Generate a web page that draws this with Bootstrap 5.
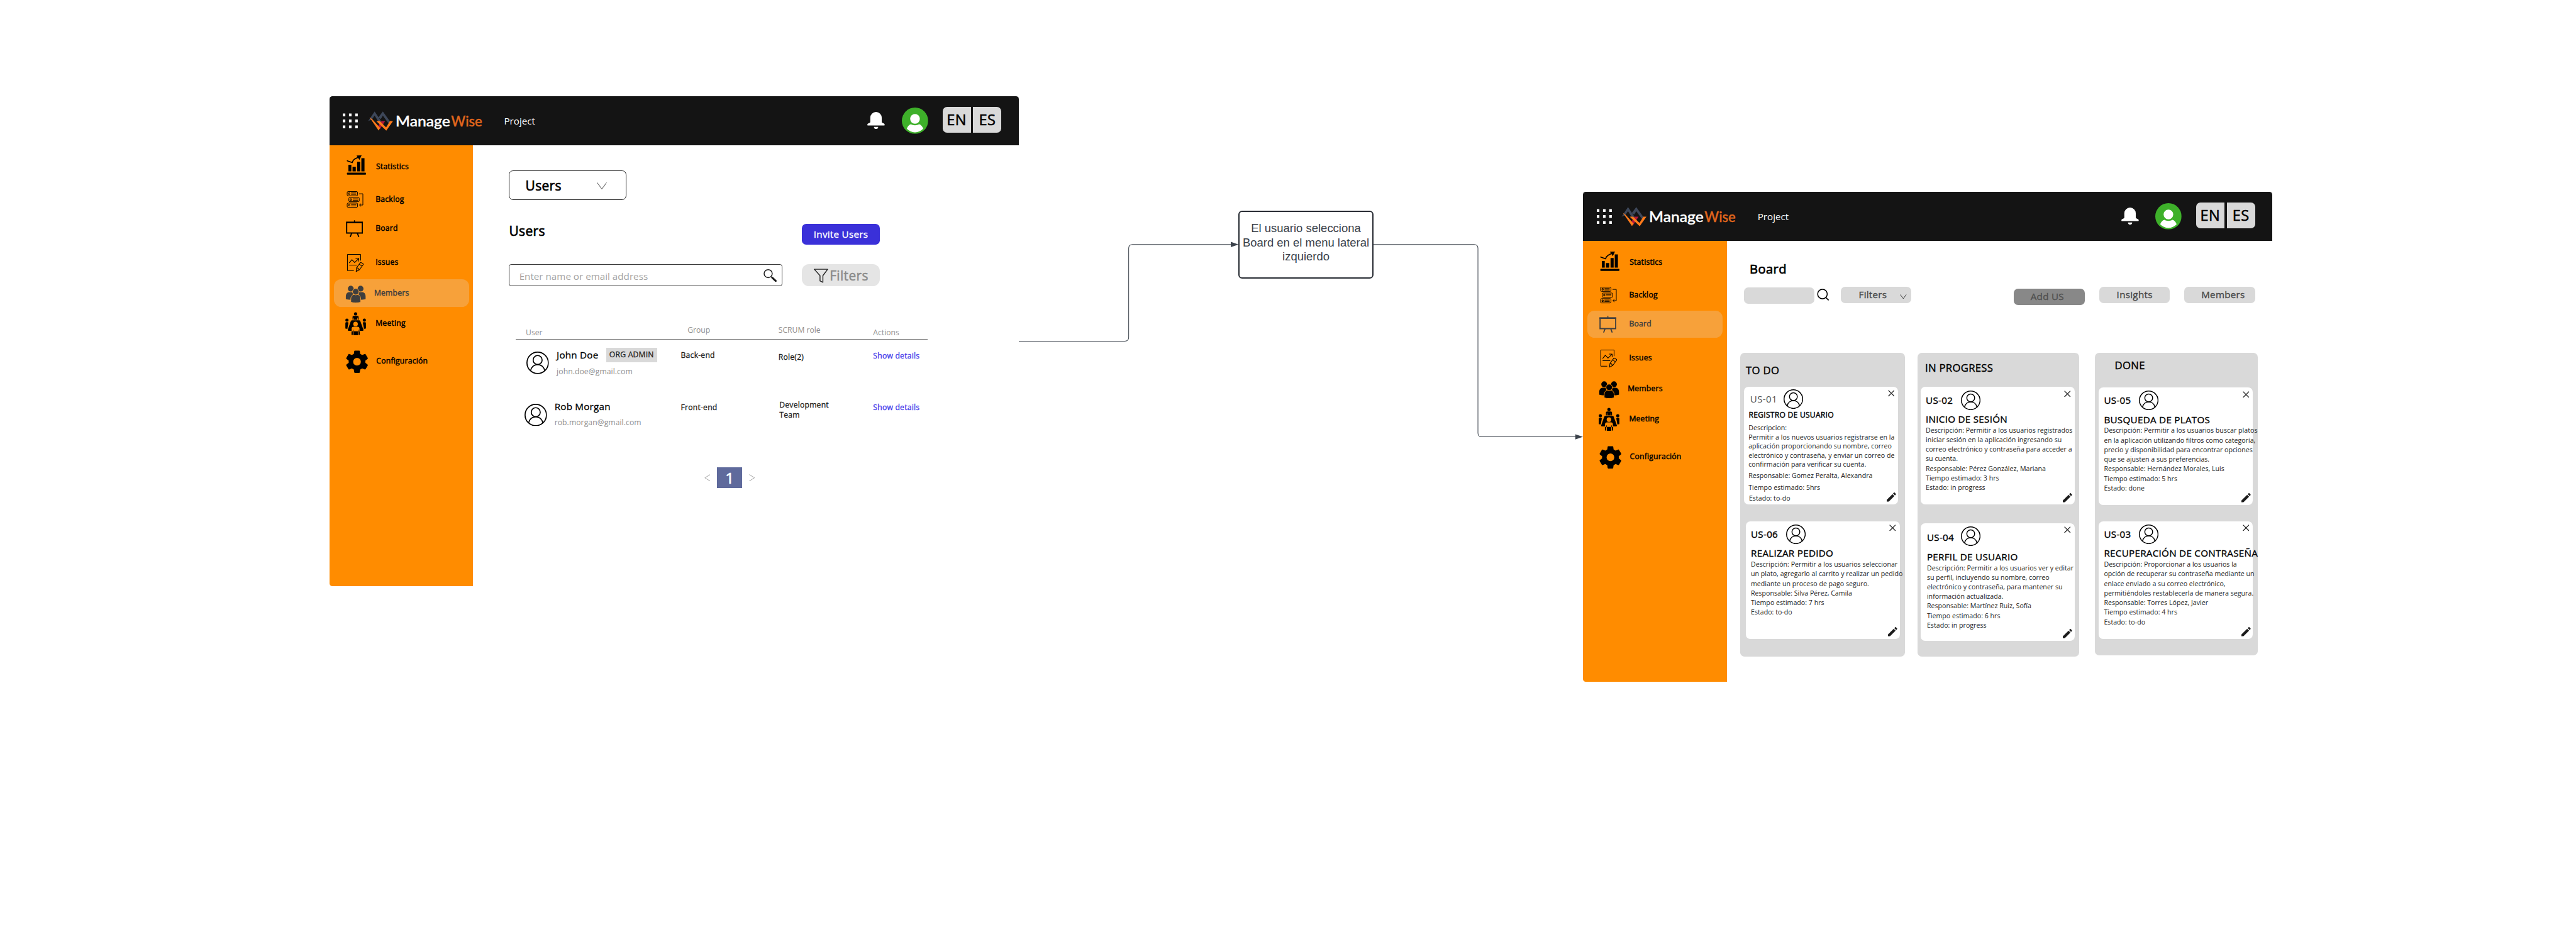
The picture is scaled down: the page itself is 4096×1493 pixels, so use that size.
<!DOCTYPE html>
<html lang="es">
<head>
<meta charset="utf-8">
<meta name="viewport" content="width=device-width, initial-scale=1">
<title>ManageWise – flujo Members a Board</title>
<link href="https://cdn.jsdelivr.net/npm/bootstrap@5.3.0/dist/css/bootstrap.min.css" rel="stylesheet">
<style>
/* 1rem = 10 units of the 5384-unit wide canvas */
html{font-size:calc(100vw / 538.4)}
body{font-family:"Open Sans","Noto Sans",sans-serif;font-size:1.6rem;line-height:2.2rem;color:#000;background:#fff;margin:0;overflow:hidden}
svg{display:block;flex:none}
.flow-canvas{position:relative;width:538.4rem;height:196.2rem;overflow:hidden}
.flow-lines{position:absolute;left:0;top:0;width:538.4rem;height:196.3rem}
.app-window{position:absolute;width:144rem;height:102.4rem;border-radius:.6rem;overflow:hidden;background:#fff}
.win-members{left:68.9rem;top:20.1rem}
.win-board{left:330.9rem;top:40.1rem}
.step-box{position:absolute;left:258.8rem;top:44rem;width:28.3rem;height:14.2rem;border:2px solid #282c33;border-radius:.8rem;background:#fff;font-family:"Liberation Sans",Arial,sans-serif;font-size:2.43rem;line-height:2.94rem;color:#3a414a;padding-bottom:.8rem;white-space:nowrap}

/* medium weight, between the regular and semibold cuts */
.side-item,.lang-btn,.pick-box,.h-users,.h-board,.btn-invite,.btn-filter,.people-body,.pill,.lane-title,.story-id,.story h3{font-weight:400;-webkit-text-stroke:.024em currentColor;letter-spacing:.018em}

.app-header{height:10.2rem;background:#141414;padding:0 3.6rem 0 2.8rem}
.ic-dots{width:3.2rem;height:3.2rem}
.brand-logo{width:24rem;height:4.4rem;margin:.5rem 0 0 2rem}
.brand-logo text{font-family:Lato,sans-serif;font-size:29.5px;font-weight:500;stroke-width:.5px}
.top-link{font-size:2rem;line-height:2.8rem;color:#fff;margin:.2rem 0 0 4.45rem}
.ic-bell{width:3.7rem;height:3.6rem;margin-right:3.5rem}
.ic-me{width:5.5rem;height:5.5rem;margin-right:3rem}
.lang-btn{width:5.9rem;height:5.4rem;background:#d9d9d9;color:#000;font-size:3.1rem;line-height:5.4rem;padding:0;border:0;margin-bottom:.3rem}
.lang-en{border-radius:.9rem 0 0 .9rem;margin-right:.5rem}
.lang-es{border-radius:0 .9rem .9rem 0}

.side-nav{width:30rem;height:92.2rem;background:#ff8c00;padding:1.75rem .9rem 0;--side-bg:#ff8c00;flex:none}
.side-item{height:5.7rem;padding:0 0 0 2.4rem;border-radius:1.5rem;color:#000;font-size:1.6rem;-webkit-text-stroke-width:.04em;flex:none}
.side-item svg{width:4.8rem;height:5rem;margin-right:1.5rem}
.side-item.is-on{background:#f7a13a;color:#3e3e3e;--side-bg:#f7a13a}
.s-stat svg{margin-right:1.6rem}
.s-stat{margin-bottom:1.1rem}.s-back{margin-bottom:.4rem}.s-board{margin-bottom:1.35rem}
.s-iss{margin-bottom:.73rem}.s-mem{margin-bottom:.67rem}.s-meet{margin-bottom:2.2rem}
.s-mem svg{margin-right:1.2rem}
.s-conf svg{margin-right:1.65rem}

/* members screen */
.members-main{padding:5.35rem 0 0 7.5rem}
.pick-box{width:24.5rem;height:6.1rem;border:1px solid #222;border-radius:.9rem;padding:.3rem 3.9rem 0 3.3rem;font-size:2.75rem;-webkit-text-stroke-width:.035em}
.pick-box svg{width:2.1rem;height:1.5rem}
.row-tools{width:77.5rem}
.row-head{height:4.4rem;margin-top:5rem}
.h-users{font-size:2.75rem;line-height:3.6rem;-webkit-text-stroke-width:.035em;margin:0 0 1.1rem}
.btn-invite{width:16.3rem;height:4.4rem;background:#3a30d9;color:#fff;border:0;border-radius:.9rem;font-size:2rem;line-height:4.4rem;padding:0}
.row-search{height:4.6rem;margin-top:4.1rem}
.find-box{width:57.1rem;border:1px solid #3a3a3a;border-radius:.5rem;padding:0 1rem 0 2rem}
.find-box input{border:0;outline:0;background:transparent;width:50rem;font-size:2rem;padding:.4rem 0 0;color:#333}
.find-box input::placeholder{color:#a3a3a3;opacity:1}
.find-box svg{width:2.8rem;height:2.7rem}
.btn-filter{width:16.3rem;border:0;border-radius:1.5rem;background:#e5e5e5;color:#8a8a8a;font-size:2.75rem;padding:.2rem 0 0 2.5rem}
.btn-filter svg{width:3rem;height:3rem;margin-right:.3rem}
.people{width:86.2rem;margin:8.05rem 0 0 1.35rem}
.people-row{display:grid;grid-template-columns:34.55rem 20.4rem 19.8rem 1fr}
.people-head{height:3.05rem;border-bottom:.2rem solid #777;color:#8e8e8e}
.people-head .low{padding-top:.6rem}
.people-head .user-col{padding-left:2.15rem}
.people-head .grp{padding-left:1.4rem}
.people-body{height:10.8rem;color:#1c1c1c}
.ic-user{width:4.7rem;height:4.7rem}
.u-name{font-size:2rem;line-height:2.8rem;color:#000}
.u-mail{color:#8e8e8e;-webkit-text-stroke-width:0;letter-spacing:.006em;margin-top:.95rem}
.org-tag{background:#d9d9d9;height:2.95rem;line-height:2.95rem;width:10.6rem;text-align:center;margin-left:1.65rem;color:#1c1c1c}
.lnk{color:#4136ea;text-decoration:none}
.p1 .who{padding:1.8rem 0 0 2.3rem}.p1 .ic-user{margin:.8rem 1.6rem 0 0}
.p1 .c2{padding-top:2.28rem}.p1 .c3{padding-top:2.61rem}.p1 .c4{padding-top:2.38rem}
.p2 .who{padding:1.8rem 0 0 1.85rem}.p2 .ic-user{margin:.8rem 1.6rem 0 0}
.p2 .c2,.p2 .c4{padding-top:2.38rem}.p2 .c3{padding:1.8rem 0 0 .2rem}
.pager{margin:5.07rem 0 0 40.8rem;gap:1.45rem}
.pager svg{width:1.25rem;height:1.5rem}
.page-now{width:5.24rem;height:4.43rem;background:#5f6a9c;color:#fff;font-size:3.2rem;line-height:4.5rem;text-align:center;-webkit-text-stroke:.03em currentColor}

/* board screen */
.board-main{padding:4.1rem 0 0 2.85rem}
.h-board{font-size:2.65rem;line-height:3.6rem;-webkit-text-stroke-width:.035em;margin:0 0 0 1.95rem}
.tool-row{height:3.83rem;margin:1.9rem 0 9.97rem .7rem;width:106.9rem}
.pill{width:14.8rem;height:3.4rem;border-radius:.9rem;background:#d9d9d9;color:#484848;font-size:2rem;line-height:3.4rem;border:0;padding:0;text-align:center;flex:none}
.pill-find{margin:.13rem .55rem 0 0}
.ic-find{width:2.6rem;height:2.5rem;margin:.5rem 2.3rem 0 0}
.pill-filter{padding:.1rem 1rem 0 3.8rem}
.pill-filter svg{width:1.4rem;height:1rem;margin-top:.7rem}
.pill-add{background:#888;color:#505050;margin:.4rem 3rem 0 auto;padding-right:.9rem}
.pill-ins{margin:.1rem 3rem 0 0}
.pill-mem{padding:.1rem 0 0 1.4rem}
.lane{background:#d9d9d9;border-radius:.9rem;height:63.5rem;flex:none}
.lane-title{font-size:2.2rem;line-height:3rem;margin:0}
.lane-todo{width:34.4rem;padding:0 .8rem;margin-right:2.6rem}
.lane-prog{width:33.75rem;padding:0 .7rem;margin-right:3.3rem}
.lane-done{width:34.1rem;height:63.3rem;padding:0 .9rem}
.lane-todo .lane-title{height:7.1rem;padding:2.25rem 0 0 .35rem}
.lane-prog .lane-title{height:7.2rem;padding:1.78rem 0 0 .9rem}
.lane-done .lane-title{height:7.3rem;padding:1.28rem 0 0 3.3rem}
.story{position:relative;width:32.2rem;height:24.57rem;background:#fff;border-radius:.95rem;padding-left:1.05rem;font-size:1.4rem;line-height:2rem;color:#222;white-space:nowrap}
.story-head{height:5.45rem}
.story-id{font-size:2rem;line-height:2.8rem;color:#000;width:7.3rem;flex:none}
.story-head .ic-user{width:4.1rem;height:4.1rem}
.ic-x{width:1.4rem;height:1.4rem;margin:.7rem .8rem 0 auto;align-self:flex-start}
.ic-pen{position:absolute;right:.5rem;bottom:.5rem;width:1.95rem;height:1.95rem}
.story h3{font-size:2rem;line-height:2.6rem;color:#000;margin:0}
.story p{margin:0}
.st-06{margin:3.6rem 0 0 .35rem}
.st-04{margin-top:3.9rem;padding-left:1.3rem}
.st-04 .story-id{padding-top:.5rem;width:7.05rem}
.st-04 h3{margin-top:.3rem}
.st-03{margin-top:3.4rem}
.st-01{padding-left:.9rem;line-height:1.9rem}
.st-01 .story-head{height:4.91rem}
.st-01 .story-id{-webkit-text-stroke-width:0;color:#505050;padding:.4rem 0 0 .35rem;width:7.3rem}
.st-01 .ic-user{margin-top:.35rem}
.st-01 h3{font-size:1.6rem;line-height:2.2rem;margin:0 0 .6rem .05rem;-webkit-text-stroke-width:.035em}
.st-01 .p-resp{margin-top:.43rem}.st-01 .p-time{margin-top:.67rem}.st-01 .p-state{margin:.33rem 0 0 .1rem}
</style>
</head>
<body>

<svg width="0" height="0" class="position-absolute" aria-hidden="true">
  <defs>
    <symbol id="i-dots" viewBox="0 0 32 32"><g fill="#fff"><path d="M0 .5h5.4v6H0zM13 .5h5.4v6H13zM26 .5h5.4v6H26zM0 13h5.4v6H0zM13 13h5.4v6H13zM26 13h5.4v6H26zM0 25.5h5.4v6H0zM13 25.5h5.4v6H13zM26 25.5h5.4v6H26z"/></g></symbol>
    <symbol id="i-bell" viewBox="0 0 37 36"><path fill="#fff" d="M6.3 12a12 12 0 0 1 24 0v8.500c0 1.700.6 2.300 2.600 2.900 2.400.7 3.500 1.500 3.500 3.400 0 .9-.4 1.500-1.300 1.500H1.500c-.9 0-1.300-.6-1.300-1.500 0-1.900 1.100-2.700 3.500-3.400 2-.6 2.600-1.200 2.600-2.900zM14 31.300h8.800c0 2.900-1.700 4.500-4.400 4.500S14 34.200 14 31.300z"/></symbol>
    <symbol id="i-me" viewBox="0 0 55 55"><circle cx="27.500" cy="27.500" r="27.500" fill="#3eb02a"/><circle cx="27.500" cy="23.600" r="10.100" fill="#fff"/><path fill="#fff" d="M10.300 44.200C12.500 39 15.500 35.500 19 35c2.500 1.700 5.300 2.200 8.500 2.200s6-.5 8.500-2.200c3.500.5 6.500 4 8.700 9.200-4.700 5-10.500 7.600-17.200 7.600s-12.500-2.600-17.200-7.600z"/></symbol>
    <symbol id="i-user" viewBox="0 0 40 40"><g fill="none" stroke="#000" stroke-width="1.900"><circle cx="20" cy="20" r="19"/><circle cx="20" cy="15" r="8"/><path d="M7.300 34C8.500 27.500 13.500 23 20 23s11.500 4.500 12.700 11"/></g></symbol>
    <symbol id="i-x" viewBox="0 0 14 14"><path d="M.8.800l12.400 12.400M13.200.800L.8 13.200" stroke="#222" stroke-width="1.700" fill="none"/></symbol>
    <symbol id="i-pen" viewBox="3 3 18 18"><path fill="#1c1c1c" d="M3 17.250V21h3.750L17.810 9.940l-3.750-3.750L3 17.250zM20.710 7.040a1 1 0 0 0 0-1.410l-2.340-2.340a1 1 0 0 0-1.410 0l-1.830 1.830 3.750 3.750 1.830-1.830z"/></symbol>
    <symbol id="i-stat" viewBox="0 0 48 50"><g fill="currentColor"><rect x="3.400" y="37.500" width="40" height="4.300" rx="1.500"/><path d="M6.600 21h6.100v13.700H6.600zM15.200 25.300H22v9.400h-6.800zM24.800 14.700h6.500v20h-6.500zM33.600 7.300h6.600v27.400h-6.600z"/><path d="M23.500 1.700L34.200 1.200 29.500 11z"/></g><path d="M4.300 12.700l10.200 3.800c1-3.500 2.500-6 5.500-7.700L29 4.200" fill="none" stroke="currentColor" stroke-width="2.200" stroke-linejoin="round" stroke-linecap="round"/></symbol>
    <symbol id="i-back" viewBox="0 0 48 50"><g fill="none" stroke="currentColor" stroke-width="1.300"><rect x="4" y="8.600" width="21.700" height="8.900" rx="2"/><rect x="7.500" y="20.900" width="21.700" height="8.900" rx="2"/><rect x="4" y="32.700" width="21.700" height="8.900" rx="2"/><path d="M6.900 11.400h2.600v3.300H6.900zM10.400 23.700H13V27h-2.600zM6.900 35.500h2.600v3.300H6.900zM12.200 11.600H23M12.200 14.500H23M15.700 23.900h10.800M15.700 26.800h10.800M12.200 35.700H23M12.200 38.600H23M29 13.300h7.800v23.500H30M33 33.800l-3.300 3 3.300 3"/></g></symbol>
    <symbol id="i-board" viewBox="0 0 48 50"><g fill="none" stroke="currentColor"><path stroke-width="2.500" d="M2.900 11.500h32.700v22H2.900z"/><path stroke-width="3.200" d="M1.600 11.400h35.300"/><path stroke-width="2" d="M19.200 6.800v4"/><path stroke-width="2.400" d="M13.300 34l-3 7.800M25.300 34l3 7.800"/></g></symbol>
    <symbol id="i-iss" viewBox="0 0 48 50"><g fill="none" stroke="currentColor" stroke-width="1.400" stroke-linejoin="round"><path d="M17.900 42.500H5.500c-.6 0-1-.4-1-1v-32c0-.6.4-1 1-1h25.700c.6 0 1 .4 1 1v12"/><path d="M8.200 26.500l5.700-7 5.600 6 8.600-8.400M21.500 17.100h6.700v6.300M8.200 30.800h16"/><path d="M22.700 44.400l.9-7.900 7.700-10.300c.6-.8 1.400-.9 2.200-.4l3.400 2.200c.9.600 1 1.500.4 2.300l-7.800 10.500zM29.300 29l5.500 4M23.600 36.500c2-.2 4 1.200 5 4"/></g></symbol>
    <symbol id="i-mem" viewBox="0 0 48 50"><g fill="currentColor"><circle cx="11.500" cy="15.700" r="6.100"/><circle cx="32" cy="15.700" r="6.100"/><path d="M1.200 37.500v-5.500c0-5.500 3-9 7.500-9h7v15.500C10 39 5 38.700 1.200 37.500zM42.500 37.500v-5.500c0-5.500-3-9-7.500-9h-7v15.500c5.500.5 10.700.2 14.500-1z"/><g stroke="var(--side-bg)" stroke-width="1.300"><path d="M11.500 44v-6.500c0-5.800 3.600-9.700 8-9.700h4.800c4.400 0 8 3.900 8 9.700V44c-6 2-14.800 2-20.800 0z"/><circle cx="21.900" cy="22.100" r="6.700"/></g></g></symbol>
    <symbol id="i-meet" viewBox="0 0 48 50"><g fill="currentColor"><circle cx="21.500" cy="3.900" r="3.400"/><path d="M15.200 16.300v-5.500c0-1.700 1-2.600 2.600-2.600h7.500c1.600 0 2.600.9 2.600 2.600v5.500h-1.700v-4h-1v4h-7.300v-4h-1v4z"/><circle cx="3.500" cy="17.200" r="3.300"/><circle cx="39.900" cy="17.200" r="3.300"/><path d="M.2 34V23.500c0-1.300.8-2 2-2h2.500c1.400 0 2 .8 1.800 2L4.600 33.500v1.700H2.500C1 35.200.2 34.800.2 34zM43.200 34V23.500c0-1.300-.8-2-2-2h-2.500c-1.400 0-2 .8-1.800 2l1.900 10v1.700h2.100c1.500 0 2.300-.4 2.300-1.200z"/><path d="M14.500 17.300h14c1.500 0 2.500.7 3 2l6.500 18c.4 1.400-.2 2.300-1.700 2.300H7c-1.500 0-2.100-.9-1.700-2.300l6.200-18c.5-1.300 1.500-2 3-2z"/></g><g fill="var(--side-bg)"><circle cx="21.500" cy="25.200" r="4.800"/><path d="M13.300 40.500V35c0-2.600 1.600-4.200 4.200-4.200h8c2.600 0 4.200 1.600 4.200 4.200v5.500z"/></g><path fill="currentColor" d="M13 40.500h2.700V48H13zM17 40.500h9.200V48.500H17zM27.500 40.500h2.700V48h-2.700zM16 37h1v4h-1zM26.300 37h1v4h-1z"/></symbol>
    <symbol id="i-gear" viewBox="0 0 48 50"><path fill="currentColor" transform="translate(-4.600 -4) scale(2.430)" d="M19.140 12.940c.04-.3.060-.61.060-.94 0-.32-.02-.64-.07-.94l2.030-1.580c.18-.14.230-.41.120-.61l-1.920-3.320c-.12-.22-.37-.29-.59-.22l-2.390.96c-.5-.38-1.030-.7-1.620-.94L14.400 2.810c-.04-.24-.24-.41-.48-.41h-3.840c-.24 0-.43.170-.47.410L9.250 5.350C8.660 5.590 8.120 5.920 7.630 6.290L5.240 5.330c-.22-.08-.47 0-.59.220L2.740 8.870c-.12.210-.08.470.120.610l2.030 1.580C4.840 11.360 4.800 11.690 4.800 12s.02.640.07.940l-2.030 1.580c-.18.140-.23.410-.12.610l1.920 3.320c.12.220.37.290.59.220l2.390-.96c.5.380 1.030.7 1.620.94l.36 2.540c.05.240.24.410.48.410h3.840c.24 0 .44-.17.470-.41l.36-2.540c.59-.24 1.130-.56 1.620-.94l2.390.96c.22.080.47 0 .59-.22l1.920-3.320c.12-.22.070-.47-.12-.61zM12 15.300A3.300 3.300 0 1 1 12 8.700a3.300 3.300 0 0 1 0 6.600z"/></symbol>
    <symbol id="i-mark" viewBox="0 0 53 42"><path fill="#3d4759" d="M.5 20.500L14 .3l15.500 23-4 4L14 9 8 17.500z"/><path fill="#3d4759" d="M21.500 13L31.200.3 49 25l-3.500 3.500L31.200 9 27 16z"/><path fill="#b0183c" d="M28 20.300h8L25 37.500 21 31z"/><path fill="#ff7a1a" d="M3.300 12.400l6 4.200L25.500 35l-3.200 5.200z"/><path fill="#ff7a1a" d="M17.500 20.300h7.200L38 33.500l8-13.200h6.500L38.400 40.300z"/></symbol>
    <symbol id="i-find" viewBox="0 0 26 25"><circle cx="11.600" cy="11.200" r="10" fill="none" stroke="#000" stroke-width="2"/><path d="M18.600 18.600l6 5.500" stroke="#000" stroke-width="2.200"/></symbol>
  </defs>
</svg>

<main class="flow-canvas">

  <svg class="flow-lines" viewBox="0 0 5384 1963" aria-hidden="true">
    <g fill="none" stroke="#3a414a" stroke-width="1.350">
      <path d="M2129 713H2351q8 0 8-8V519q0-8 8-8H2574"/>
      <path d="M2870 511H3081q8 0 8 8V905q0 8 8 8H3294"/>
    </g>
    <path fill="#3a414a" d="M2572.500 505.500L2588.500 511l-16 5.500zM3292.500 907.500L3308.500 913l-16 5.500z"/>
  </svg>

  <!-- Members screen -->
  <section class="app-window win-members">
    <header class="app-header d-flex align-items-center">
      <svg class="ic-dots"><use href="#i-dots"/></svg>
      <svg class="brand-logo" viewBox="0 0 240 44"><use href="#i-mark" width="53" height="42"/><text x="58" y="31" fill="#fff" stroke="#fff" textLength="114" lengthAdjust="spacingAndGlyphs">Manage</text><text x="174" y="31" fill="#e0661c" stroke="#e0661c" textLength="65" lengthAdjust="spacingAndGlyphs">Wise</text></svg>
      <span class="top-link">Project</span>
      <svg class="ic-bell ms-auto"><use href="#i-bell"/></svg>
      <svg class="ic-me"><use href="#i-me"/></svg>
      <button class="lang-btn lang-en">EN</button><button class="lang-btn lang-es">ES</button>
    </header>
    <div class="d-flex">
      <nav class="side-nav d-flex flex-column">
        <a class="side-item s-stat d-flex align-items-center text-decoration-none"><svg><use href="#i-stat"/></svg>Statistics</a>
        <a class="side-item s-back d-flex align-items-center text-decoration-none"><svg><use href="#i-back"/></svg>Backlog</a>
        <a class="side-item s-board d-flex align-items-center text-decoration-none"><svg><use href="#i-board"/></svg>Board</a>
        <a class="side-item s-iss d-flex align-items-center text-decoration-none"><svg><use href="#i-iss"/></svg>Issues</a>
        <a class="side-item s-mem is-on d-flex align-items-center text-decoration-none"><svg><use href="#i-mem"/></svg>Members</a>
        <a class="side-item s-meet d-flex align-items-center text-decoration-none"><svg><use href="#i-meet"/></svg>Meeting</a>
        <a class="side-item s-conf d-flex align-items-center text-decoration-none"><svg><use href="#i-gear"/></svg>Configuración</a>
      </nav>
      <div class="members-main">
        <div class="pick-box d-flex align-items-center justify-content-between">Users
          <svg viewBox="0 0 21 15"><path d="M.8.500L10.500 14 20.200.500" fill="none" stroke="#444" stroke-width="1.300"/></svg>
        </div>
        <div class="row-tools row-head d-flex align-items-center justify-content-between">
          <h1 class="h-users">Users</h1>
          <button class="btn-invite">Invite Users</button>
        </div>
        <div class="row-tools row-search d-flex justify-content-between">
          <div class="find-box d-flex align-items-center justify-content-between">
            <input type="text" placeholder="Enter name or email address" aria-label="Search users">
            <svg viewBox="0 0 28 27"><ellipse cx="9.800" cy="9.300" rx="8.500" ry="8.300" fill="none" stroke="#222" stroke-width="2"/><path d="M16 16l2.500 2" stroke="#222" stroke-width="2"/><path d="M18.500 18l7 6.500" stroke="#1c1c1c" stroke-width="4" stroke-linecap="round"/></svg>
          </div>
          <button class="btn-filter d-flex align-items-center"><svg viewBox="0 0 30 30"><path d="M1 1.500h28l-10 13.300V28.800l-6-2.900V14.800z" fill="none" stroke="#222" stroke-width="1.900" stroke-linejoin="round"/></svg>Filters</button>
        </div>
        <div class="people">
          <div class="people-row people-head">
            <div class="low user-col">User</div><div class="grp">Group</div><div>SCRUM role</div><div class="low">Actions</div>
          </div>
          <div class="people-row people-body p1">
            <div class="who d-flex">
              <svg class="ic-user"><use href="#i-user"/></svg>
              <div><div class="d-flex align-items-center"><span class="u-name">John Doe</span><span class="org-tag">ORG ADMIN</span></div><div class="u-mail">john.doe@gmail.com</div></div>
            </div>
            <div class="c2">Back-end</div><div class="c3">Role(2)</div><div class="c4"><a class="lnk">Show details</a></div>
          </div>
          <div class="people-row people-body p2">
            <div class="who d-flex">
              <svg class="ic-user"><use href="#i-user"/></svg>
              <div><div class="u-name">Rob Morgan</div><div class="u-mail">rob.morgan@gmail.com</div></div>
            </div>
            <div class="c2">Front-end</div><div class="c3">Development<br>Team</div><div class="c4"><a class="lnk">Show details</a></div>
          </div>
        </div>
        <div class="pager d-flex align-items-center">
          <svg viewBox="0 0 12.500 15"><path d="M12 .8L1 7.500l11 6.700" fill="none" stroke="#999" stroke-width="1.200"/></svg>
          <span class="page-now">1</span>
          <svg viewBox="0 0 12.500 15"><path d="M.5.800l11 6.700-11 6.700" fill="none" stroke="#999" stroke-width="1.200"/></svg>
        </div>
      </div>
    </div>
  </section>

  <!-- Step between both screens -->
  <div class="step-box d-flex align-items-center justify-content-center text-center"><div>El usuario selecciona<br>Board en el menu lateral<br>izquierdo</div></div>

  <!-- Board screen -->
  <section class="app-window win-board">
    <header class="app-header d-flex align-items-center">
      <svg class="ic-dots"><use href="#i-dots"/></svg>
      <svg class="brand-logo" viewBox="0 0 240 44"><use href="#i-mark" width="53" height="42"/><text x="58" y="31" fill="#fff" stroke="#fff" textLength="114" lengthAdjust="spacingAndGlyphs">Manage</text><text x="174" y="31" fill="#e0661c" stroke="#e0661c" textLength="65" lengthAdjust="spacingAndGlyphs">Wise</text></svg>
      <span class="top-link">Project</span>
      <svg class="ic-bell ms-auto"><use href="#i-bell"/></svg>
      <svg class="ic-me"><use href="#i-me"/></svg>
      <button class="lang-btn lang-en">EN</button><button class="lang-btn lang-es">ES</button>
    </header>
    <div class="d-flex">
      <nav class="side-nav d-flex flex-column">
        <a class="side-item s-stat d-flex align-items-center text-decoration-none"><svg><use href="#i-stat"/></svg>Statistics</a>
        <a class="side-item s-back d-flex align-items-center text-decoration-none"><svg><use href="#i-back"/></svg>Backlog</a>
        <a class="side-item s-board is-on d-flex align-items-center text-decoration-none"><svg><use href="#i-board"/></svg>Board</a>
        <a class="side-item s-iss d-flex align-items-center text-decoration-none"><svg><use href="#i-iss"/></svg>Issues</a>
        <a class="side-item s-mem d-flex align-items-center text-decoration-none"><svg><use href="#i-mem"/></svg>Members</a>
        <a class="side-item s-meet d-flex align-items-center text-decoration-none"><svg><use href="#i-meet"/></svg>Meeting</a>
        <a class="side-item s-conf d-flex align-items-center text-decoration-none"><svg><use href="#i-gear"/></svg>Configuración</a>
      </nav>
      <div class="board-main">
        <h1 class="h-board">Board</h1>
        <div class="tool-row d-flex align-items-start">
          <div class="pill pill-find"></div>
          <svg class="ic-find"><use href="#i-find"/></svg>
          <button class="pill pill-filter d-flex align-items-center justify-content-between">Filters <svg viewBox="0 0 14 10"><path d="M.8.600L7 9 13.200.600" fill="none" stroke="#333" stroke-width="1.300"/></svg></button>
          <button class="pill pill-add">Add US</button>
          <button class="pill pill-ins">Insights</button>
          <button class="pill pill-mem">Members</button>
        </div>
        <div class="d-flex align-items-start">
          <div class="lane lane-todo">
            <h2 class="lane-title">TO DO</h2>
            <article class="story st-01">
              <div class="story-head d-flex align-items-center"><span class="story-id">US-01</span><svg class="ic-user"><use href="#i-user"/></svg><svg class="ic-x"><use href="#i-x"/></svg></div>
              <h3>REGISTRO DE USUARIO</h3>
              <p>Descripcion:<br>Permitir a los nuevos usuarios registrarse en la<br>aplicación proporcionando su nombre, correo<br>electrónico y contraseña, y enviar un correo de<br>confirmación para verificar su cuenta.</p>
              <p class="p-resp">Responsable: Gomez Peralta, Alexandra</p>
              <p class="p-time">Tiempo estimado: 5hrs</p>
              <p class="p-state">Estado: to-do</p>
              <svg class="ic-pen"><use href="#i-pen"/></svg>
            </article>
            <article class="story st-06">
              <div class="story-head d-flex align-items-center"><span class="story-id">US-06</span><svg class="ic-user"><use href="#i-user"/></svg><svg class="ic-x"><use href="#i-x"/></svg></div>
              <h3>REALIZAR PEDIDO</h3>
              <p>Descripción: Permitir a los usuarios seleccionar<br>un plato, agregarlo al carrito y realizar un pedido<br>mediante un proceso de pago seguro.<br>Responsable: Silva Pérez, Camila<br>Tiempo estimado: 7 hrs<br>Estado: to-do</p>
              <svg class="ic-pen"><use href="#i-pen"/></svg>
            </article>
          </div>
          <div class="lane lane-prog">
            <h2 class="lane-title">IN PROGRESS</h2>
            <article class="story st-02">
              <div class="story-head d-flex align-items-center"><span class="story-id">US-02</span><svg class="ic-user"><use href="#i-user"/></svg><svg class="ic-x"><use href="#i-x"/></svg></div>
              <h3>INICIO DE SESIÓN</h3>
              <p>Descripción: Permitir a los usuarios registrados<br>iniciar sesión en la aplicación ingresando su<br>correo electrónico y contraseña para acceder a<br>su cuenta.<br>Responsable: Pérez González, Mariana<br>Tiempo estimado: 3 hrs<br>Estado: in progress</p>
              <svg class="ic-pen"><use href="#i-pen"/></svg>
            </article>
            <article class="story st-04">
              <div class="story-head d-flex align-items-center"><span class="story-id">US-04</span><svg class="ic-user"><use href="#i-user"/></svg><svg class="ic-x"><use href="#i-x"/></svg></div>
              <h3>PERFIL DE USUARIO</h3>
              <p>Descripción: Permitir a los usuarios ver y editar<br>su perfil, incluyendo su nombre, correo<br>electrónico y contraseña, para mantener su<br>información actualizada.<br>Responsable: Martínez Ruiz, Sofía<br>Tiempo estimado: 6 hrs<br>Estado: in progress</p>
              <svg class="ic-pen"><use href="#i-pen"/></svg>
            </article>
          </div>
          <div class="lane lane-done">
            <h2 class="lane-title">DONE</h2>
            <article class="story st-05">
              <div class="story-head d-flex align-items-center"><span class="story-id">US-05</span><svg class="ic-user"><use href="#i-user"/></svg><svg class="ic-x"><use href="#i-x"/></svg></div>
              <h3>BUSQUEDA DE PLATOS</h3>
              <p>Descripción: Permitir a los usuarios buscar platos<br>en la aplicación utilizando filtros como categoría,<br>precio y disponibilidad para encontrar opciones<br>que se ajusten a sus preferencias.<br>Responsable: Hernández Morales, Luis<br>Tiempo estimado: 5 hrs<br>Estado: done</p>
              <svg class="ic-pen"><use href="#i-pen"/></svg>
            </article>
            <article class="story st-03">
              <div class="story-head d-flex align-items-center"><span class="story-id">US-03</span><svg class="ic-user"><use href="#i-user"/></svg><svg class="ic-x"><use href="#i-x"/></svg></div>
              <h3>RECUPERACIÓN DE CONTRASEÑA</h3>
              <p>Descripción: Proporcionar a los usuarios la<br>opción de recuperar su contraseña mediante un<br>enlace enviado a su correo electrónico,<br>permitiéndoles restablecerla de manera segura.<br>Responsable: Torres López, Javier<br>Tiempo estimado: 4 hrs<br>Estado: to-do</p>
              <svg class="ic-pen"><use href="#i-pen"/></svg>
            </article>
          </div>
        </div>
      </div>
    </div>
  </section>
</main>

<script src="https://cdn.jsdelivr.net/npm/bootstrap@5.3.0/dist/js/bootstrap.bundle.min.js"></script>
</body>
</html>
